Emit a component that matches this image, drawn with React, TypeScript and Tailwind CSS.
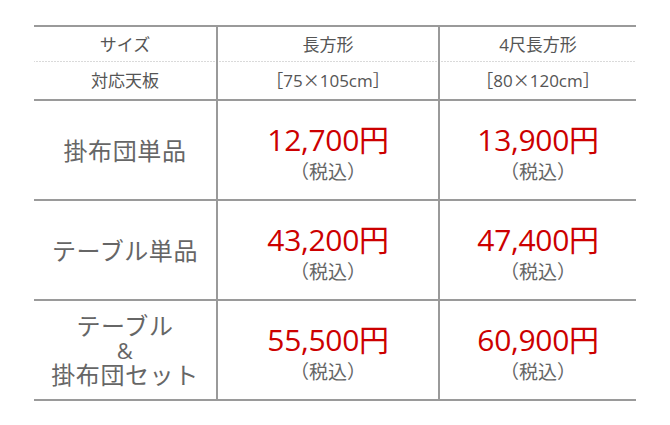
const cellBase = 'flex flex-col items-center justify-center text-center';
const divider = 'border-r-2 border-[#9a9a9a]';
const rowLine = 'border-b-2 border-[#9a9a9a]';
const cols = 'grid grid-cols-[184px_222px_196px]';
const headText = 'text-[17px] text-[#555]';

interface PriceRow {
  label: string[];
  prices: [string, string];
}

const rows: PriceRow[] = [
  { label: ['掛布団単品'], prices: ['12,700円', '13,900円'] },
  { label: ['テーブル単品'], prices: ['43,200円', '47,400円'] },
  { label: ['テーブル', '&', '掛布団セット'], prices: ['55,500円', '60,900円'] },
];

const Price = ({ value }: { value: string }) => (
  <div className={`${cellBase} h-full pt-[8px]`}>
    <div className="text-[30px] leading-[36px] text-[#cc0000] tracking-[-0.3px]">{value}</div>
    <div className="text-[19px] leading-[28px] text-[#666]">（税込）</div>
  </div>
);

const BoardSize = ({ w, d }: { w: number; d: number }) => (
  <span className="whitespace-nowrap">
    ［{w}
    <span style={{ fontFamily: '"Noto Sans CJK JP", sans-serif' }}>×</span>
    {d}cm］
  </span>
);

export default function App() {
  return (
    <div
      className="w-[670px] h-[425px] bg-white pl-[34px] pt-[25px]"
      style={{ fontFamily: '"Open Sans", "Noto Sans CJK JP", sans-serif' }}
    >
      <div className="w-[602px] border-t-2 border-[#9a9a9a]">
        {/* size row */}
        <div
          className={`${cols} h-[35px] bg-[linear-gradient(to_right,#b5b5b5_1px,transparent_1px)] bg-[length:3px_1px] bg-repeat-x bg-bottom`}
        >
          <div className={`${cellBase} ${divider} ${headText}`}>サイズ</div>
          <div className={`${cellBase} ${divider} ${headText}`}>長方形</div>
          <div className={`${cellBase} ${headText}`}>4尺長方形</div>
        </div>
        {/* top board row */}
        <div className={`${cols} h-[39px] ${rowLine}`}>
          <div className={`${cellBase} ${divider} ${headText}`}>対応天板</div>
          <div className={`${cellBase} ${divider} ${headText}`}>
            <BoardSize w={75} d={105} />
          </div>
          <div className={`${cellBase} ${headText}`}>
            <BoardSize w={80} d={120} />
          </div>
        </div>
        {rows.map((row) => (
          <div key={row.label.join('')} className={`${cols} h-[100px] ${rowLine}`}>
            <div className={`${cellBase} ${divider} text-[24px] leading-[25px] tracking-[0.6px] text-[#666]`}>
              {row.label.map((line) => (
                <span key={line} className={line === '&' ? 'text-[22px] leading-[24px]' : ''}>
                  {line}
                </span>
              ))}
            </div>
            <div className={divider}>
              <Price value={row.prices[0]} />
            </div>
            <Price value={row.prices[1]} />
          </div>
        ))}
      </div>
    </div>
  );
}
